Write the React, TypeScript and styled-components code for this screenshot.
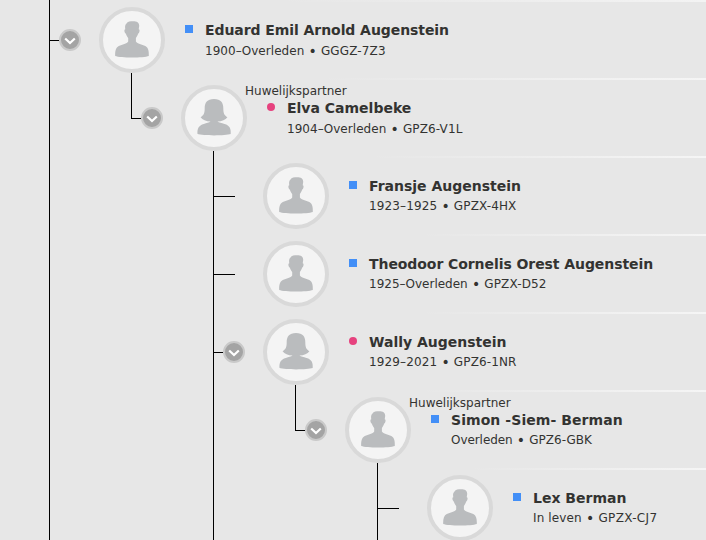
import React from 'react';
import styled, { createGlobalStyle } from 'styled-components';

const GlobalStyle = createGlobalStyle`
  * { box-sizing: border-box; }
  body { margin: 0; background: #e7e7e7; overflow: hidden; }
`;

type Guide = 'line' | 'blank';
type Branch = 'tee' | 'elbow';

interface Person {
  name: string;
  dates: string;
  id: string;
  sex: 'male' | 'female';
  guides: Guide[];
  branch: Branch;
  nameTracking?: number;
  dateTracking?: number;
  idTracking?: number;
  toggle?: boolean;
  stem?: boolean;
  spouse?: boolean;
}

const people: Person[] = [
  { name: 'Eduard Emil Arnold Augenstein', nameTracking: -0.07, dates: '1900–Overleden', dateTracking: 0.04, id: 'GGGZ-7Z3', sex: 'male', guides: [], branch: 'tee', toggle: true, stem: true },
  { name: 'Elva Camelbeke', dates: '1904–Overleden', dateTracking: 0.04, id: 'GPZ6-V1L', sex: 'female', guides: ['line'], branch: 'elbow', toggle: true, stem: true, spouse: true },
  { name: 'Fransje Augenstein', dates: '1923–1925', id: 'GPZX-4HX', sex: 'male', guides: ['line', 'blank'], branch: 'tee' },
  { name: 'Theodoor Cornelis Orest Augenstein', nameTracking: -0.07, dates: '1925–Overleden', dateTracking: 0, id: 'GPZX-D52', sex: 'male', guides: ['line', 'blank'], branch: 'tee' },
  { name: 'Wally Augenstein', dates: '1929–2021', id: 'GPZ6-1NR', sex: 'female', guides: ['line', 'blank'], branch: 'tee', toggle: true, stem: true },
  { name: 'Simon -Siem- Berman', nameTracking: 0.07, dates: 'Overleden', dateTracking: -0.06, id: 'GPZ6-GBK', idTracking: 0, sex: 'male', guides: ['line', 'blank', 'line'], branch: 'elbow', toggle: true, stem: true, spouse: true },
  { name: 'Lex Berman', dates: 'In leven', id: 'GPZX-CJ7', idTracking: 0.35, sex: 'male', guides: ['line', 'blank', 'line', 'blank'], branch: 'tee' },
];

const Page = styled.main`
  width: 706px;
  height: 540px;
  overflow: hidden;
  background: #e7e7e7;
  color: #333331;
  font-family: Verdana, "DejaVu Sans", sans-serif;
`;

const TopEdge = styled.div`
  height: 2px;
  padding-left: 49px;
  background: linear-gradient(90deg, transparent 280px, #f3f3f3) no-repeat;
`;

const Row = styled.div<{ $depth: number }>`
  display: flex;
  height: 78px;
  padding-left: 49px;
  background: linear-gradient(90deg, transparent ${(p) => 320 + p.$depth * 50}px, #f5f5f5) 0 100% / 100% 2px no-repeat;
`;

const GuideCell = styled.div<{ $line?: boolean }>`
  flex: none;
  width: 82px;
  height: 100%;
  border-left: 1px solid ${(p) => (p.$line ? '#000' : 'transparent')};
`;

const EdgeLine = styled(GuideCell)`
  width: 1px;
`;

const Connector = styled.div<{ $branch: Branch }>`
  flex: none;
  display: flex;
  align-items: flex-start;
  width: 50px;
  background:
    linear-gradient(#000, #000) 0 0 / 1px ${(p) => (p.$branch === 'elbow' ? '39px' : '100%')} no-repeat;
`;

const Arm = styled.span<{ $short?: boolean }>`
  flex: none;
  width: ${(p) => (p.$short ? 10 : 22)}px;
  height: 1px;
  margin-top: 38px;
  background: #000;
`;

const Toggle = styled.button`
  flex: none;
  display: grid;
  place-items: center;
  width: 22px;
  height: 22px;
  margin-top: 27px;
  padding: 1px 0 0;
  border: 2px solid #c9c9c9;
  border-radius: 50%;
  background: #a4a4a4;
`;

const AvatarColumn = styled.div`
  flex: none;
  width: 66px;
  padding-top: 5px;
`;

const Avatar = styled.div`
  display: grid;
  place-items: center;
  width: 66px;
  height: 66px;
  border: 4px solid #d9d9d9;
  border-radius: 50%;
  background: #f4f4f4;
`;

const Stem = styled.div`
  width: 1px;
  height: 7px;
  margin-left: 32px;
  background: #000;
`;

const Info = styled.div`
  display: flex;
  flex-direction: column;
  white-space: nowrap;
`;

const Relation = styled.div`
  height: 18px;
  margin-left: -2px;
  padding-top: 4px;
  font-size: 12px;
  line-height: 14px;
`;

const NameLine = styled.div<{ $spouse?: boolean }>`
  display: flex;
  align-items: flex-start;
  height: 20px;
  margin-top: ${(p) => (p.$spouse ? 0 : 18)}px;
  padding-left: 20px;
`;

const SexMark = styled.span<{ $sex: Person['sex'] }>`
  width: 8px;
  height: 8px;
  margin: 5px 12px 0 0;
  border-radius: ${(p) => (p.$sex === 'female' ? '50%' : '0')};
  background: ${(p) => (p.$sex === 'female' ? '#e6427e' : '#438ff7')};
`;

const Name = styled.strong<{ $tracking?: number }>`
  font-size: 14px;
  line-height: 20px;
  letter-spacing: ${(p) => p.$tracking ?? 0}px;
`;

const Details = styled.div<{ $lowered?: boolean }>`
  display: flex;
  height: 20px;
  padding: ${(p) => (p.$lowered ? 1 : 0)}px 0 0 40px;
  font-size: 12px;
  line-height: 20px;
`;

const Detail = styled.span<{ $tracking?: number }>`
  letter-spacing: ${(p) => p.$tracking ?? 0.13}px;
`;

const Dot = styled.span`
  width: 16.6px;
  font-size: 14px;
  text-align: center;
`;

const Chevron = () => (
  <svg width="12" height="8" viewBox="0 0 12 8" fill="none">
    <path d="M1.2 1.5 6 6 10.8 1.5" stroke="#fff" strokeWidth="2.2" />
  </svg>
);

const Silhouette = ({ sex }: { sex: Person['sex'] }) => (
  <svg width="58" height="58" viewBox="0 -0.7 58 58" fill="#babcbe">
    {sex === 'male' ? (
      <path d="M23.3 12C24.7 9.7 27.4 9.6 30 9.6C34 9.6 36.2 11 36.2 14.2L35.7 17.5C37.2 17.5 36.6 21.3 35.1 22C34.6 24 33.4 25.2 32.9 26.3V29.8C34.2 32.3 39 32.6 42.3 34.4C45.3 36 46 39.5 45.8 44.2C40.5 46.2 17.5 46.2 12.2 44.2C12 39.5 12.8 36 15.8 34.4C19.2 32.6 24 32.3 25.2 29.8V26.3C24.5 25.2 23.4 24 22.9 22C21.4 21.3 20.8 17.5 22.3 17.5C21.9 15.4 21.9 13.2 23.3 12Z" />
    ) : (
      <path d="M29 9.4C35.8 9.4 38.3 13.2 38.3 18.4C38.3 23.4 39 25.5 42.4 27.6C40.5 30.4 37 31.6 32.4 31.9C34 33 36.5 33.4 39.5 34.3C44.8 35.6 46.1 39.2 45.7 44.4C40.5 46.2 17.7 46.2 12.5 44.4C12.1 39.2 13.6 35.6 18.8 34.3C21.7 33.4 24 33 25.6 31.9C21 31.6 17.5 30.4 15.6 27.6C19 25.5 19.7 23.4 19.7 18.4C19.7 13.2 22.2 9.4 29 9.4Z" />
    )}
  </svg>
);

const PersonRow = ({ person }: { person: Person }) => (
  <Row $depth={person.guides.length}>
    {person.guides.map((g, i) => (
      <GuideCell key={i} $line={g === 'line'} />
    ))}
    <Connector $branch={person.branch}>
      <Arm $short={person.toggle} />
      {person.toggle && (
        <Toggle aria-label={person.name}>
          <Chevron />
        </Toggle>
      )}
    </Connector>
    <AvatarColumn>
      <Avatar>
        <Silhouette sex={person.sex} />
      </Avatar>
      {person.stem && <Stem />}
    </AvatarColumn>
    <Info>
      {person.spouse && <Relation>Huwelijkspartner</Relation>}
      <NameLine $spouse={person.spouse}>
        <SexMark $sex={person.sex} />
        <Name $tracking={person.nameTracking}>{person.name}</Name>
      </NameLine>
      <Details $lowered={person.guides.length < 2}>
        <Detail $tracking={person.dateTracking}>{person.dates}</Detail>
        <Dot>•</Dot>
        <Detail $tracking={person.idTracking}>{person.id}</Detail>
      </Details>
    </Info>
  </Row>
);

export default function App() {
  return (
    <>
      <GlobalStyle />
      <Page>
        <TopEdge>
          <EdgeLine $line />
        </TopEdge>
        {people.map((p) => (
          <PersonRow key={p.id} person={p} />
        ))}
      </Page>
    </>
  );
}
